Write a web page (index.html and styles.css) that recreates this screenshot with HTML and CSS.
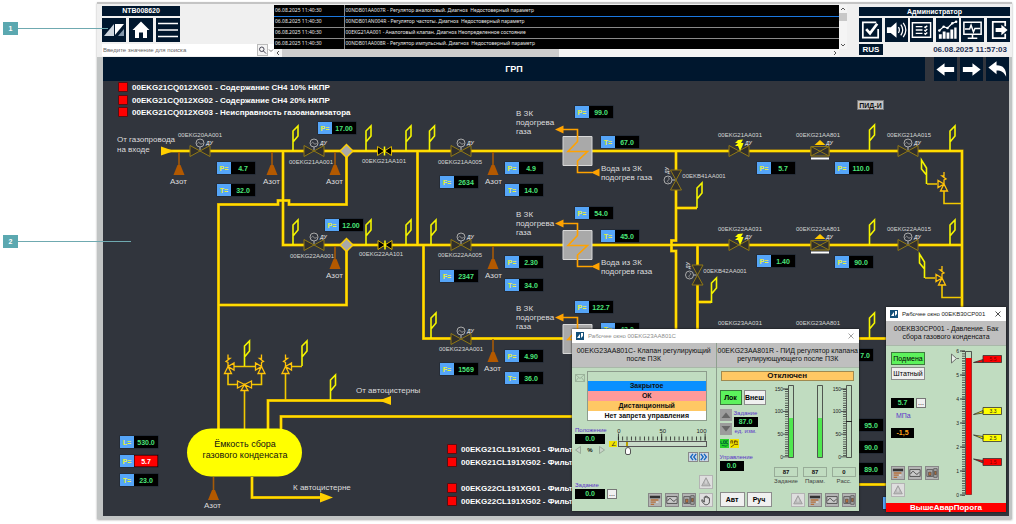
FILE: index.html
```html
<!DOCTYPE html>
<html lang="ru">
<head>
<meta charset="utf-8">
<title>ГРП</title>
<link rel="stylesheet" href="styles.css">
</head>
<body>
<svg class="defs" width="0" height="0" aria-hidden="true">
  <defs>
    <symbol id="i-bars" viewBox="0 0 14 14"><path d="M1 2h12v3H1z" fill="#333"/><path d="M2 7h9M2 9.500h6M2 12h4" stroke="#b5713c" stroke-width="1.500"/><path d="M8 9.500h3" stroke="#eee"/></symbol>
    <symbol id="i-wave" viewBox="0 0 14 14"><path d="M1 3h12v8H1z" fill="#c9c9c9" stroke="#444"/><path d="M2 8c2-4 3.500-3 5-1s3 2 5-1" fill="none" stroke="#333"/></symbol>
    <symbol id="i-unit" viewBox="0 0 14 14"><path d="M1 3h7v8H1zM9 2h4v10H9z" fill="#aaa" stroke="#555"/><path d="M3 6h3v4H3zM10 5h2v4h-2z" fill="#b5713c" stroke="#333" stroke-width=".6"/></symbol>
    <symbol id="i-tri" viewBox="0 0 14 14"><path d="M7 2l5 9.500H2z" fill="#bbb" stroke="#999"/><path d="M7 5v4" stroke="#eee"/></symbol>
    <symbol id="i-hand" viewBox="0 0 14 14"><path d="M2.500 6.500l2.500 3V4c0-1 1.400-1 1.400 0V3c0-1 1.500-1 1.500 0v1c0-1 1.500-1 1.500 0v1c0-1 1.600-1 1.600 0v4c0 2-1.500 3.500-3.500 3.500S4.500 12 2 8z" fill="#ddd" stroke="#333"/></symbol>
    <symbol id="i-app" viewBox="0 0 8 8"><path d="M0 0h8v8H0z" fill="#14507a"/><path d="M1 6l3-4v4zM5 1h2v3L5 6z" fill="#fff"/></symbol>

    <g id="flag"><path d="M0 0V-20L5-25V-15L0-9" fill="none" stroke="#f4f400" stroke-width="1.600"/></g>
    <g id="flagL"><path d="M0 0V-16L-5-24V-15L0-9" fill="none" stroke="#f4f400" stroke-width="1.600"/></g>
    <g id="bow"><path d="M-10-5.500L0 0L10-5.500V5.500L0 0L-10 5.500Z" fill="#302f2c" stroke="#917914"/></g>
    <g id="motor"><path d="M-9.500-3H9.500V3H-9.500z" fill="#31353d"/><use href="#bow"/><path d="M0-1V-4" stroke="#bbb"/><circle cy="-8" r="4" fill="#31353d" stroke="#a9a9a9"/><path d="M-2.500-7.500c1-2 2-1 2.500 0s1.500 1.500 2.500-.5" fill="none" stroke="#a9a9a9" stroke-width=".8"/></g>
    <g id="bolt"><path d="M-9.500-3H9.500V3H-9.500z" fill="#31353d"/><use href="#bow"/><path d="M-1-11L4-11.500 2-8H4.500L3-4 1 0-1-5H-4L-1-8H-4z" fill="#ff0"/></g>
    <g id="control"><path d="M-9-4.500H9V5H-9z" fill="#31353d" stroke="#917914"/><path d="M-9-4.500L9 5V-4.500L-9 5z" fill="#302f2c" stroke="#917914"/><path d="M-5.500-6L0-11 5.500-6z" fill="#ffc800"/><path d="M-9 7.500H9" stroke="#fff" stroke-width="2"/></g>
    <g id="hand"><path d="M-7-4.500L0 0-7 4.500zM7-4.500L0 0 7 4.500z" fill="#000" stroke="#d9b400"/><path d="M0-4.500v9" stroke="#ff0" stroke-width="1.500"/></g>
    <g id="diamond"><path d="M0-6.500L6.500 0 0 6.500-6.500 0z" fill="#a9a9a9" stroke="#ffd000" stroke-width="1.400"/></g>
    <g id="azot"><path d="M0 1V14" stroke="#a65a08" stroke-width="1.600"/><path d="M-1.500 14L-5.500 24H5.500L1.500 14Z" fill="#b35900"/></g>
    <g id="relief" fill="#31353d" stroke="#ffc20a" stroke-width="1.300"><path d="M0 0L6-3.500V3.500zM0 0L-3.500 7H3.500zM0 0V-4L-2-5 2-8 0-8V-12"/></g>
    <g id="tee" fill="#31353d" stroke="#ffc20a" stroke-width="1.300"><path d="M0 0L7-3.500V3.500zM0 0L-7-3.500V3.500zM0 0L-3.500 6H3.500z"/></g>
    <g id="heater"><path d="M563 136.500H592V165.500H563z" fill="#a9a9a9" stroke="#d8d8d8"/><path d="M562 129.500H577.500V141.500L568 151.500H587.500L577.500 161V172.500H592" fill="none" stroke="#ffa200" stroke-width="1.600"/><path d="M555 129.500L563.500 125.500V133.500zM591 172.500L599.500 168.500V176.500z" fill="#ffa200"/></g>
    <g id="ind"><path d="M-.5-.5H38.500V12.500H-.5z" fill="#1b2533"/><path d="M0 0H14V12H0z" fill="#55a5f8"/><path d="M14 0H38V12H14z" fill="#000"/></g>
    <path id="alarm" d="M.5.5H9.500V9.500H.5z" fill="#f00" stroke="#5a0d10"/>
  </defs>
</svg>

<main class="frame">
  <header class="top">
    <div class="station">
      <button class="name-btn">NTB008620</button>
      <div class="tool-row">
        <button class="tool" aria-label="Схема"><svg viewBox="0 0 24 24"><path d="M2 18L12 6V18z" fill="#ced6de"/><path d="M13 6H22L13 17z" fill="#fff"/><path d="M16 18L22 11V18z" fill="#8497aa"/></svg></button>
        <button class="tool" aria-label="Домой"><svg viewBox="0 0 24 24"><path d="M12 3.500L3.500 12H6V20H10V14.500H14V20H18V12H20.500z" fill="#fff"/></svg></button>
        <button class="tool" aria-label="Меню"><svg viewBox="0 0 24 24"><path d="M2 5.500H22M2 12H22M2 18.500H22" stroke="#fff" stroke-width="1.600"/></svg></button>
      </div>
      <form class="search">
        <input type="text" aria-label="Поиск" placeholder="Введите значение для поиска">
        <button type="button" class="find" aria-label="Найти"><svg viewBox="0 0 10 10"><circle cx="4.200" cy="4.200" r="2.500" fill="none" stroke="#334"/><path d="M6 6l3 3" stroke="#334"/></svg></button>
        <button type="button" class="drop" aria-label="Список"><svg viewBox="0 0 6 10"><path d="M1 4.500l2 2 2-2" fill="none" stroke="#777"/></svg></button>
      </form>
    </div>

    <div class="events">
      <table class="log">
        <tr class="sel"><td>06.08.2025 11:40:30</td><td>00NDB01AA007R - Регулятор аналоговый. Диагноз&nbsp; Недостоверный параметр</td></tr>
        <tr><td>06.08.2025 11:40:30</td><td>00NDB01AN004R - Регулятор частоты. Диагноз&nbsp; Недостоверный параметр</td></tr>
        <tr><td>06.08.2025 11:40:30</td><td>00EKG21AA001 - Аналоговый клапан. Диагноз Неопределенное состояние</td></tr>
        <tr><td>06.08.2025 11:40:30</td><td>00NDB01AA008R - Регулятор импульсный. Диагноз&nbsp; Недостоверный параметр</td></tr>
      </table>
      <div class="vbar"><svg viewBox="0 0 8 8"><path d="M2 5l2-2 2 2" fill="none" stroke="#555"/></svg><i></i><svg viewBox="0 0 8 8"><path d="M2 3l2 2 2-2" fill="none" stroke="#555"/></svg></div>
      <div class="hbar"><svg viewBox="0 0 8 8"><path d="M5 2L3 4l2 2" fill="none" stroke="#555"/></svg><i></i><svg viewBox="0 0 8 8"><path d="M3 2l2 2-2 2" fill="none" stroke="#555"/></svg></div>
    </div>

    <div class="user">
      <button class="name-btn">Администратор</button>
      <div class="tool-row">
        <button class="tool" aria-label="Квитировать"><svg viewBox="0 0 24 24"><path d="M18 4H4V20H20V11" fill="none" stroke="#fff" stroke-width="1.800"/><path d="M7.500 11L11.500 15.500 19 5.500" fill="none" stroke="#fff" stroke-width="2.800"/></svg></button>
        <button class="tool" aria-label="Звук"><svg viewBox="0 0 24 24"><path d="M2 9H6L12 4V20L6 15H2z" fill="#fff"/><path d="M14 9q2 3 0 6M16.500 6.500q4 5.500 0 11M19 4.500q5.500 7.500 0 15" fill="none" stroke="#fff" stroke-width="1.300"/></svg></button>
        <button class="tool" aria-label="Журнал"><svg viewBox="0 0 24 24"><path d="M2.500 4.500H21.500V19.500H2.500zM6 8.500H13M6 12H13M6 15.500H13M15 8.500l1 1 2-2M15 12l1 1 2-2M15 15.500l1 1 2-2" fill="none" stroke="#fff" stroke-width="1.500"/></svg></button>
        <button class="tool" aria-label="Тренды"><svg viewBox="0 0 24 24"><path d="M3 16.500H6V21H3zM7 13.500H10V21H7zM11 14.500H14V21H11zM15 11.500H18V21H15zM19 9.500H21.500V21H19z" fill="#fff"/><path d="M3 13L8 8.500 12 10 17 5 21 3.500" fill="none" stroke="#fff" stroke-width="1.300"/><g fill="#fff"><circle cx="3.500" cy="12.500" r="1.300"/><circle cx="8" cy="8.500" r="1.300"/><circle cx="12" cy="10" r="1.300"/><circle cx="17" cy="5" r="1.300"/><circle cx="21" cy="3.500" r="1.300"/></g></svg></button>
        <button class="tool" aria-label="Диагностика"><svg viewBox="0 0 24 24"><path d="M3 4H21V16.500H3zM12 17V20M7 20.500H17" fill="none" stroke="#fff" stroke-width="1.600"/><path d="M4 11H9L10.500 7 13 14 14.500 10.500H20" fill="none" stroke="#fff" stroke-width="1.500"/></svg></button>
        <button class="tool" aria-label="Выход"><svg viewBox="0 0 24 24"><path d="M19 8V3.500H6V20.500H19V16" fill="none" stroke="#fff" stroke-width="1.800"/><path d="M9 10H15V6.500L21.500 12 15 17.500V14H9z" fill="#fff"/></svg></button>
      </div>
      <div class="status-row"><button class="lang">RUS</button><time>06.08.2025 11:57:03</time></div>
    </div>
  </header>

  <section class="stage">
    <nav class="title-bar">
      <h1>ГРП</h1>
      <button class="nav-btn" aria-label="Назад"><svg viewBox="0 0 24 24"><path d="M2.500 12.500L11 6V10H21V15H11V19z" fill="#fff"/></svg></button>
      <button class="nav-btn" aria-label="Вперёд"><svg viewBox="0 0 24 24"><path d="M21.500 12.500L13 6V10H3V15H13V19z" fill="#fff"/></svg></button>
      <button class="nav-btn" aria-label="Вернуться"><svg viewBox="0 0 24 24"><path d="M2.500 10.500L11 4V8C18 8 21.500 12 21 20 19 15.500 16 13.500 11 13.500V17.500z" fill="#fff"/></svg></button>
    </nav>

    <div class="canvas">
      <svg class="scheme" viewBox="103 81 906 435">
        <defs>
          <path id="pipes" d="M165 151H962V340M283 151V245H418M218.500 429V204.500H278V200.500H289V204.500H346.500V151M346.500 245V305H218.500M340 245H962M417.500 151V245M423.500 245V338.500H962M676 151V240.500H671.500V251H676V339M697.500 245V339M676 208H697M697.500 302H711M268 429V400.500H384M281 431V416.500H600M252 477V497.500H322M850 484.500H900"/>
        </defs>
        <use href="#pipes" class="pipe-edge"/>
        <use href="#pipes" class="pipe-core"/>
        <path class="thin" d="M927 184H937M944 190V203.500H962M925 278H935M942 285V297.500H962M228 372V384.500H238M261.500 372V384.500H252M234 366.500H256M244.500 391V429M291 366.500H302M285.500 373V400"/>
        <g fill="#ffcf00"><path d="M161 146.500L174 151 161 155.500zM391 396L379 400.500 391 405zM320 492.500L333 497.500 320 502.500z"/></g>

        <use href="#motor" x="200" y="151"/><use href="#motor" x="314" y="151"/><use href="#motor" x="461" y="151"/><use href="#motor" x="908" y="151"/>
        <use href="#motor" x="314" y="245"/><use href="#motor" x="461" y="245"/><use href="#motor" x="908" y="245"/>
        <use href="#motor" x="461" y="339"/>
        <use href="#motor" transform="translate(676 180) rotate(-90)"/><use href="#motor" transform="translate(697.500 275) rotate(-90)"/>
        <use href="#bolt" x="739" y="151"/><use href="#bolt" x="739" y="245"/>
        <use href="#control" x="820" y="151"/><use href="#control" x="820" y="245"/>
        <use href="#hand" x="384.500" y="151"/><use href="#hand" x="385" y="245"/>
        <use href="#diamond" x="346.500" y="151"/><use href="#diamond" x="346.500" y="245"/>

        <use href="#flag" x="293" y="151"/><use href="#flag" x="366" y="151"/><use href="#flag" x="406" y="151"/><use href="#flag" x="429.500" y="151"/><use href="#flag" x="869.500" y="150"/><use href="#flag" x="950" y="151"/>
        <use href="#flag" x="293" y="245"/><use href="#flag" x="366" y="245"/><use href="#flag" x="406" y="245"/><use href="#flag" x="431" y="245"/><use href="#flag" x="869.500" y="245"/><use href="#flag" x="950" y="245"/>
        <use href="#flag" x="431" y="338"/><use href="#flag" x="869.500" y="338"/><use href="#flag" x="697" y="208"/><use href="#flag" x="711.500" y="303"/>
        <use href="#flag" x="244.500" y="366"/><use href="#flag" x="302" y="366"/><use href="#flag" x="330.500" y="400"/>
        <use href="#flagL" x="926.500" y="184"/><use href="#flagL" x="924.500" y="278"/>

        <use href="#azot" x="179" y="151"/><use href="#azot" x="272" y="151"/><use href="#azot" x="335" y="151"/><use href="#azot" x="493" y="151"/>
        <use href="#azot" x="335" y="245"/><use href="#azot" x="493" y="245"/><use href="#azot" x="493" y="338"/><use href="#azot" x="213.500" y="476"/>

        <use href="#relief" transform="translate(944 184) scale(-1 1)"/><use href="#relief" transform="translate(942 278) scale(-1 1)"/>
        <use href="#relief" x="228" y="366.500"/><use href="#relief" transform="translate(261.500 366.500) scale(-1 1)"/><use href="#relief" x="285.500" y="366.500"/>
        <use href="#tee" x="244.500" y="384.500"/>
        <use href="#heater"/><use href="#heater" y="94"/><use href="#heater" y="188"/>

        <rect x="187" y="428.500" width="115" height="48" rx="24" fill="#ff0"/>
        <g class="tank"><text x="245" y="447">Ёмкость сбора</text><text x="245" y="458">газового конденсата</text></g>

        <g class="du">
          <text x="206" y="145">ДУ</text><text x="320" y="145">ДУ</text><text x="467" y="145">ДУ</text><text x="914" y="145">ДУ</text><text x="745" y="145">ДУ</text><text x="826" y="145">ДУ</text>
          <text x="320" y="239">ДУ</text><text x="467" y="239">ДУ</text><text x="914" y="239">ДУ</text><text x="745" y="239">ДУ</text><text x="826" y="239">ДУ</text><text x="467" y="333">ДУ</text>
          <text transform="translate(669 174) rotate(-90)">ДУ</text><text transform="translate(690 269) rotate(-90)">ДУ</text>
        </g>
        <g class="tag">
          <text x="200" y="137">00EKG20AA001</text><text x="311" y="164">00EKG21AA001</text><text x="384" y="163">00EKG21AA101</text><text x="460" y="164">00EKG21AA005</text>
          <text x="740" y="137">00EKG21AA031</text><text x="818" y="137">00EKG21AA801</text><text x="909" y="137">00EKG21AA015</text><text x="704" y="178">00EKB41AA001</text>
          <text x="312" y="258">00EKG22AA001</text><text x="381" y="256">00EKG22AA101</text><text x="460" y="257">00EKG22AA005</text>
          <text x="740" y="231">00EKG22AA031</text><text x="818" y="231">00EKG22AA801</text><text x="909" y="231">00EKG22AA015</text><text x="725" y="273">00EKB42AA001</text>
          <text x="461" y="351">00EKG23AA001</text><text x="740" y="325">00EKG23AA031</text><text x="818" y="325">00EKG23AA801</text>
        </g>
        <g class="label">
          <text x="117" y="142">От газопровода</text><text x="117" y="152">на входе</text>
          <text x="170" y="184">Азот</text><text x="263" y="184">Азот</text><text x="326" y="184">Азот</text><text x="485" y="184">Азот</text>
          <text x="326" y="278">Азот</text><text x="485" y="278">Азот</text><text x="484" y="371">Азот</text><text x="204" y="508">Азот</text>
          <text x="516" y="116">В ЗК</text><text x="516" y="125">подогрева</text><text x="516" y="134">газа</text>
          <text x="516" y="217">В ЗК</text><text x="516" y="226">подогрева</text><text x="516" y="235">газа</text>
          <text x="516" y="311">В ЗК</text><text x="516" y="320">подогрева</text><text x="516" y="329">газа</text>
          <text x="601" y="171">Вода из ЗК</text><text x="601" y="180">подогрев газа</text>
          <text x="601" y="265">Вода из ЗК</text><text x="601" y="274">подогрев газа</text>
          <text x="356" y="393">От автоцистерны</text><text x="293" y="490">К автоцистерне</text>
        </g>
        <g class="alarm">
          <use href="#alarm" x="118" y="82"/><text x="132" y="90">00EKG21CQ012XG01 - Содержание CH4 10% НКПР</text>
          <use href="#alarm" x="118" y="95"/><text x="132" y="103">00EKG21CQ012XG02 - Содержание CH4 20% НКПР</text>
          <use href="#alarm" x="118" y="107"/><text x="132" y="115">00EKG21CQ012XG03 - Неисправность газоанализатора</text>
          <use href="#alarm" x="447" y="444"/><text x="461" y="452">00EKG21CL191XG01 - Фильтр</text>
          <use href="#alarm" x="447" y="457"/><text x="461" y="465">00EKG21CL191XG02 - Фильтр</text>
          <use href="#alarm" x="447" y="483"/><text x="461" y="491">00EKG22CL191XG01 - Фильтр</text>
          <use href="#alarm" x="447" y="496"/><text x="461" y="504">00EKG22CL191XG02 - Фильтр</text>
        </g>
        <rect x="857.500" y="100.500" width="26" height="9" fill="#c4c4c4" stroke="#777"/><text class="mode" x="870.500" y="108">ПИД-И</text>

        <g class="ind">
          <g transform="translate(318 122)"><use href="#ind"/><text class="q" x="7" y="9">P=</text><text x="26" y="9">17.00</text></g>
          <g transform="translate(217 162)"><use href="#ind"/><text class="q" x="7" y="9">P=</text><text x="26" y="9">4.7</text></g>
          <g transform="translate(217 184)"><use href="#ind"/><text class="q" x="7" y="9">T=</text><text x="26" y="9">32.0</text></g>
          <g transform="translate(325 219)"><use href="#ind"/><text class="q" x="7" y="9">P=</text><text x="26" y="9">12.00</text></g>
          <g transform="translate(440 176)"><use href="#ind"/><text class="q" x="7" y="9">F=</text><text x="26" y="9">2634</text></g>
          <g transform="translate(505 162)"><use href="#ind"/><text class="q" x="7" y="9">P=</text><text x="26" y="9">4.9</text></g>
          <g transform="translate(505 184)"><use href="#ind"/><text class="q" x="7" y="9">T=</text><text x="26" y="9">14.0</text></g>
          <g transform="translate(575 106)"><use href="#ind"/><text class="q" x="7" y="9">P=</text><text x="26" y="9">99.0</text></g>
          <g transform="translate(601 136)"><use href="#ind"/><text class="q" x="7" y="9">T=</text><text x="26" y="9">67.0</text></g>
          <g transform="translate(575 207)"><use href="#ind"/><text class="q" x="7" y="9">P=</text><text x="26" y="9">54.0</text></g>
          <g transform="translate(601 230)"><use href="#ind"/><text class="q" x="7" y="9">T=</text><text x="26" y="9">45.0</text></g>
          <g transform="translate(440 270)"><use href="#ind"/><text class="q" x="7" y="9">F=</text><text x="26" y="9">2347</text></g>
          <g transform="translate(505 256)"><use href="#ind"/><text class="q" x="7" y="9">P=</text><text x="26" y="9">2.30</text></g>
          <g transform="translate(505 279)"><use href="#ind"/><text class="q" x="7" y="9">T=</text><text x="26" y="9">34.0</text></g>
          <g transform="translate(757 162)"><use href="#ind"/><text class="q" x="7" y="9">P=</text><text x="26" y="9">5.7</text></g>
          <g transform="translate(835 162)"><use href="#ind"/><text class="q" x="7" y="9">P=</text><text x="26" y="9">110.0</text></g>
          <g transform="translate(757 255)"><use href="#ind"/><text class="q" x="7" y="9">P=</text><text x="26" y="9">1.40</text></g>
          <g transform="translate(835 256)"><use href="#ind"/><text class="q" x="7" y="9">P=</text><text x="26" y="9">90.0</text></g>
          <g transform="translate(575 301)"><use href="#ind"/><text class="q" x="7" y="9">P=</text><text x="26" y="9">122.7</text></g>
          <g transform="translate(601 323)"><use href="#ind"/><text class="q" x="7" y="9">T=</text><text x="26" y="9">43.0</text></g>
          <g transform="translate(440 363)"><use href="#ind"/><text class="q" x="7" y="9">F=</text><text x="26" y="9">1569</text></g>
          <g transform="translate(505 350)"><use href="#ind"/><text class="q" x="7" y="9">P=</text><text x="26" y="9">4.90</text></g>
          <g transform="translate(505 372)"><use href="#ind"/><text class="q" x="7" y="9">T=</text><text x="26" y="9">36.0</text></g>
          <g transform="translate(120 436)"><use href="#ind"/><text class="q" x="7" y="9">L=</text><text x="26" y="9">530.0</text></g>
          <g transform="translate(120 455)"><use href="#ind"/><path d="M14.500.500h23v11h-23z" fill="#f00"/><text class="q" x="7" y="9">P=</text><text class="hot" x="26" y="9">5.7</text></g>
          <g transform="translate(120 474)"><use href="#ind"/><text class="q" x="7" y="9">T=</text><text x="26" y="9">23.0</text></g>
          <g transform="translate(835 349)"><use href="#ind"/><text x="30" y="9">7.0</text></g>
          <g transform="translate(845 419)"><use href="#ind"/><text x="26" y="9">95.0</text></g>
          <g transform="translate(845 441)"><use href="#ind"/><text x="26" y="9">90.0</text></g>
          <g transform="translate(845 463)"><use href="#ind"/><text x="26" y="9">89.0</text></g>
          <g transform="translate(883 497)"><use href="#ind"/></g>
        </g>
      </svg>

      <article class="win win-control">
        <div class="win-title"><svg class="app"><use href="#i-app"/></svg><span class="dim">Рабочее окно 00EKG23AA801C</span><button class="close dim" aria-label="Закрыть"><svg viewBox="0 0 8 8"><path d="M1.500 1.500l5 5M6.500 1.500l-5 5" stroke="currentColor" stroke-width=".8"/></svg></button></div>
        <div class="panels">
          <section class="panel">
            <h2>00EKG23AA801C- Клапан регулирующий<br>после ПЗК</h2>
            <div class="panel-body">
              <div class="state">
                <svg class="mail" viewBox="0 0 10 8"><path d="M.5.500h9v7h-9zM.5.500l4.500 4 4.500-4M.5 7.500l3-4M9.500 7.500l-3-4" fill="none" stroke="#93a893" stroke-width=".8"/></svg>
                <ul class="state-list"><li></li><li class="blue">Закрытое</li><li class="pink">ОК</li><li class="amber">Дистанционный</li><li class="white">Нет запрета управления</li></ul>
              </div>
              <div class="position">
                <div class="field"><span class="cap">Положение</span><output class="val">0.0</output>
                  <div class="step"><svg viewBox="0 0 6 8"><path d="M5.500.500v7L.5 4z" fill="#c8d4c8" stroke="#8a9a8a" stroke-width=".7"/></svg><b>%</b><svg viewBox="0 0 6 8"><path d="M.5.500v7l5-3.500z" fill="#c8d4c8" stroke="#8a9a8a" stroke-width=".7"/></svg></div>
                </div>
                <div class="slider">
                  <svg class="scale" viewBox="0 0 98 14"><g class="num"><text x="10" y="6" text-anchor="middle">0</text><text x="54" y="6" text-anchor="middle">50</text><text x="93" y="6" text-anchor="middle">100</text></g><path d="M9 11.500H97.500" stroke="#222" stroke-width="4" stroke-dasharray=".8 3.560"/><path d="M9 10H97.500" stroke="#222" stroke-width="7" stroke-dasharray=".8 42.800"/></svg>
                  <div class="slide-row"><span class="chip">&#8736;</span><input type="range" min="0" max="100" value="7" aria-label="Положение"></div>
                </div>
              </div>
              <div class="jump"><button class="mini" aria-label="Меньше"><svg viewBox="0 0 10 10"><path d="M5 1L2 5l3 4M9 1L6 5l3 4" fill="none" stroke="#1668c0" stroke-width="1.700"/></svg></button><button class="mini" aria-label="Больше"><svg viewBox="0 0 10 10"><path d="M1 1l3 4-3 4M5 1l3 4-3 4" fill="none" stroke="#1668c0" stroke-width="1.700"/></svg></button></div>
              <div class="foot">
                <div class="field"><span class="cap">Задание</span><div class="pair"><output class="val">0.0</output><button class="dots">...</button></div></div>
                <div class="icons">
                  <button class="ico pale last" aria-label="Тревога"><svg><use href="#i-tri"/></svg></button>
                  <button class="ico" aria-label="Обзор"><svg><use href="#i-bars"/></svg></button><button class="ico" aria-label="Тренд"><svg><use href="#i-wave"/></svg></button><button class="ico" aria-label="Агрегат"><svg><use href="#i-unit"/></svg></button><button class="ico pale" aria-label="Ручной"><svg><use href="#i-hand"/></svg></button>
                </div>
              </div>
            </div>
          </section>
          <section class="panel">
            <h2>00EKG23AA801R - ПИД регулятор клапана<br>регулирующующего после ПЗК</h2>
            <div class="panel-body pid">
              <p class="off">Отключен</p>
              <div class="pid-main">
                <div class="pid-left">
                  <div class="btn-row"><button class="btn on">Лок</button><button class="btn">Внеш</button></div>
                  <div class="set">
                    <div class="arrows"><button class="arr" aria-label="Больше"><svg viewBox="0 0 12 12"><path d="M6 3.500L10.500 9h-9z" fill="#666"/></svg></button><button class="arr" aria-label="Меньше"><svg viewBox="0 0 12 12"><path d="M6 8.500L10.500 3h-9z" fill="#666"/></svg></button></div>
                    <div class="field"><span class="cap">Задание</span><output class="val">87.0</output><span class="cap mid">ед. изм.</span></div>
                  </div>
                  <div class="locks"><svg viewBox="0 0 10 10"><path d="M0 0h10v10H0z" fill="#29d329"/><path d="M1 2v3h2M4 2h2v3H4zM9 2H7v3h2M2 7l5 1 2-2" fill="none" stroke="#063"/></svg><svg viewBox="0 0 10 10"><path d="M0 0h10v10H0z" fill="#f0e400"/><path d="M1 5V2h2v3M5 5V2h2v1H5M8 2v3M1 9l4-3h4" fill="none" stroke="#640"/></svg></div>
                  <div class="field"><span class="cap">Управление</span><output class="val">0.0</output></div>
                </div>
                <div class="gauges">
                  <div class="gauge"><svg viewBox="0 0 24 76"><g class="num"><text x="9" y="7">150</text><text x="9" y="29">100</text><text x="9" y="52">50</text><text x="9" y="75">0</text></g><path d="M12.500 5V73.500" stroke="#333" stroke-width="3" stroke-dasharray=".7 1.580"/><path d="M11.500 4.600V73.500" stroke="#333" stroke-width="5" stroke-dasharray=".8 21.800"/><path d="M14.500 1.500h5v72h-5z" fill="#c0dcc0" stroke="#333" stroke-width=".8"/><path d="M15 34h4v39h-4z" fill="#4fe84f"/></svg><output>87</output><span>Задание</span></div>
                  <div class="gauge"><svg viewBox="0 0 24 76"><path d="M14.500 1.500h5v72h-5z" fill="#c0dcc0" stroke="#333" stroke-width=".8"/><path d="M15 34h4v39h-4z" fill="#4fe84f"/></svg><output>87</output><span>Парам.</span></div>
                  <div class="gauge"><svg viewBox="0 0 24 76"><g class="num"><text x="9" y="7">150</text><text x="9" y="29">100</text><text x="9" y="52">50</text><text x="9" y="75">0</text></g><path d="M12.500 5V73.500" stroke="#333" stroke-width="3" stroke-dasharray=".7 1.580"/><path d="M11.500 4.600V73.500" stroke="#333" stroke-width="5" stroke-dasharray=".8 21.800"/><path d="M14.500 1.500h5v72h-5z" fill="#c0dcc0" stroke="#333" stroke-width=".8"/><path d="M14 37.500h6" stroke="#222"/></svg><output>0</output><span>Расс.</span></div>
                </div>
              </div>
              <div class="pid-foot">
                <div class="btn-row"><button class="btn wide">Авт</button><button class="btn wide">Руч</button></div>
                <div class="icons"><button class="ico pale" aria-label="Тревога"><svg><use href="#i-tri"/></svg></button><button class="ico" aria-label="Обзор"><svg><use href="#i-bars"/></svg></button><button class="ico" aria-label="Тренд"><svg><use href="#i-wave"/></svg></button><button class="ico" aria-label="Агрегат"><svg><use href="#i-unit"/></svg></button></div>
              </div>
            </div>
          </section>
        </div>
      </article>

      <article class="win win-pressure">
        <div class="win-title"><svg class="app"><use href="#i-app"/></svg><span>Рабочее окно 00EKB30CP001</span><button class="close" aria-label="Закрыть"><svg viewBox="0 0 8 8"><path d="M1.500 1.500l5 5M6.500 1.500l-5 5" stroke="currentColor" stroke-width=".8"/></svg></button></div>
        <h2 class="wide">00EKB30CP001 - Давление. Бак<br>сбора газового конденсата</h2>
        <div class="pressure">
          <div class="p-left">
            <button class="btn sub on">Подмена</button>
            <button class="btn sub">Штатный</button>
            <div class="pair first"><output class="val">5.7</output><button class="dots">...</button></div>
            <span class="unit">МПа</span>
            <output class="val warn">-1,5</output>
            <div class="icons"><button class="ico" aria-label="Обзор"><svg><use href="#i-bars"/></svg></button><button class="ico" aria-label="Тренд"><svg><use href="#i-wave"/></svg></button><button class="ico" aria-label="Агрегат"><svg><use href="#i-unit"/></svg></button></div>
            <button class="ico pale" aria-label="Тревога"><svg><use href="#i-tri"/></svg></button>
          </div>
          <svg class="p-gauge" viewBox="946 346 58 156">
            <g class="num"><text x="959" y="352">6</text><text x="959" y="376">5</text><text x="959" y="400">4</text><text x="959" y="424">3</text><text x="959" y="448">2</text><text x="959" y="472">1</text><text x="959" y="496">0</text></g>
            <path d="M963.500 350V494.500" stroke="#333" stroke-width="3" stroke-dasharray=".8 1.600"/><path d="M962.500 349.600V494.500" stroke="#333" stroke-width="5" stroke-dasharray=".8 23.200"/>
            <path d="M965.500 350.500h6v143h-6z" fill="#c0dcc0" stroke="#333" stroke-width=".8"/><path d="M966 357h5.500v136.500H966z" fill="#f00"/>
            <path d="M951.500 353v9l5-4.500zM957 357.500h2" fill="#e8f0e8" stroke="#555" stroke-width=".8"/>
            <g stroke="#333" stroke-width=".8"><path d="M973.500 361.500L983 358.500V361.500zM983 354.500h18.500v7H983zM973.500 458L983 459.500V462zM983 457.500h18.500v7H983z" fill="#f00"/><path d="M973.500 413.500L983 409.500V412zM983 406.500h18.500v7H983zM973.500 434L983 435.500V438zM983 433.500h18.500v7H983z" fill="#ff0"/></g>
            <g class="num mid"><text class="r" x="993" y="360">5.5</text><text x="993" y="412">3.3</text><text x="993" y="439">2.5</text><text class="r" x="993" y="463">1.5</text></g>
          </svg>
        </div>
        <p class="alert">ВышеАварПорога</p>
      </article>
    </div>
  </section>
</main>

<div class="callout one"><span>1</span><i></i></div>
<div class="callout two"><span>2</span><i></i></div>
</body>
</html>
```
FILE: styles.css
```css
* { box-sizing: border-box; }
body { margin: 0; background: #fff; font-family: "Liberation Sans", Arial, sans-serif; font-size: 7px; line-height: 8px; color: #111; }
button { font: inherit; padding: 0; border: 0; margin: 0; display: block; cursor: pointer; }
h1, h2, p, ul { margin: 0; padding: 0; }
svg { display: block; }
.defs { position: absolute; }

.frame { margin: 2px 4px 4px 97px; background: #c1c4c4; border-top: 2px solid #c4c4c4; box-shadow: 0 1px 2px #aaa; }

.top { display: flex; height: 53px; background: #f0f0f0; }
.station { width: 177px; padding: 2px 0 1px 5px; display: flex; flex-direction: column; gap: 2px; }
.name-btn { height: 10px; line-height: 10px; background: #00172e; color: #fff; font-weight: bold; font-size: 7px; text-align: center; }
.station .name-btn { width: 78px; }
.tool-row { display: flex; gap: 3px; }
.tool { width: 24px; height: 24px; background: #00172e; }
.tool svg { width: 24px; height: 24px; }
.search { display: flex; height: 12px; background: #fff; }
.search input { flex: 1; min-width: 0; border: 0; padding: 0 1px; font: 6px "Liberation Sans", Arial, sans-serif; background: #fff; }
.search input::placeholder { color: #666; opacity: 1; }
.find { width: 11px; background: #f4f4f4; border: 1px solid #bbb; }
.drop { width: 6px; background: #fff; }
.find svg, .drop svg { height: 10px; width: 100%; }

.events { flex: 1; display: grid; grid-template-columns: 1fr 8px; grid-template-rows: 44px 8px; padding-top: 1px; background: #f0f0f0; }
.log { width: 100%; height: 44px; border-collapse: collapse; background: #000; color: #e8e8e8; font: 5px/9px "Noto Sans", sans-serif; table-layout: fixed; }
.log td { height: 11px; padding: 0 1px; border-bottom: 1px solid #8a8a8a; white-space: nowrap; }
.log td:first-child { width: 70px; border-right: 1px solid #8a8a8a; }
.log .sel td { border-bottom: 1px solid #1b78e0; }
.vbar { display: flex; flex-direction: column; background: #f4f4f4; }
.vbar svg, .hbar svg { width: 8px; height: 8px; }
.vbar i { height: 8px; background: #c8c8c8; margin-bottom: auto; }
.hbar { display: flex; background: #f4f4f4; }
.hbar i { width: 49%; background: #cdcdcd; margin-right: auto; }

.user { width: 151px; margin: 3px 2px 0 12px; display: flex; flex-direction: column; gap: 2px; }
.user .name-btn { height: 9px; line-height: 9px; }
.user .tool-row { gap: 2px; justify-content: space-between; }
.user .tool { width: 23px; }
.user .tool svg { width: 23px; }
.status-row { display: flex; justify-content: space-between; }
.lang { width: 24px; height: 11px; line-height: 11px; background: #00172e; color: #fff; font-size: 8px; font-weight: bold; }
.status-row time { font-size: 8px; line-height: 12px; font-weight: bold; color: #1d2f52; padding-right: 3px; }

.stage { padding: 0 3px 3px 6px; }
.title-bar { display: flex; gap: 3px; height: 24px; background: #31353d; }
.title-bar h1 { flex: 1; margin-right: 6px; background: #00172e; color: #fff; font-size: 9px; line-height: 25px; text-align: center; }
.nav-btn { width: 23px; background: #00172e; }
.nav-btn svg { width: 23px; height: 24px; }

.canvas { position: relative; background: #31353d; }
.scheme { width: 100%; height: auto; }
.pipe-edge { fill: none; stroke: #c99a00; stroke-width: 3; }
.pipe-core { fill: none; stroke: #ffdc00; stroke-width: 2; }
.thin { fill: none; stroke: #f2c800; stroke-width: 1.6; }
.tank { font-size: 9px; text-anchor: middle; fill: #111; }
.du { font: italic bold 5px "Liberation Sans", Arial, sans-serif; fill: #ccc; }
.tag { font-size: 6px; text-anchor: middle; fill: #d6d6d6; }
.label { font-size: 8px; fill: #dcdcdc; }
.alarm { font-size: 8px; font-weight: bold; fill: #fff; }
.mode { font-size: 7px; font-weight: bold; text-anchor: middle; fill: #111; }
.ind { font-size: 7px; font-weight: bold; text-anchor: middle; fill: #4be57a; }
.ind .q { fill: #e6f03c; }
.ind .hot { fill: #fff; }

.win { position: absolute; background: #c0dcc0; box-shadow: 0 0 2px #111; }
.win-control { right: 150px; bottom: 5px; width: 287px; }
.win-pressure { right: 3px; bottom: 4px; width: 120px; }
.win-title { display: flex; align-items: center; gap: 4px; height: 14px; padding: 0 4px; background: #fff; font-size: 6px; color: #222; }
.win-title .dim { color: #8c8c8c; }
.app { width: 8px; height: 8px; }
.close { margin-left: auto; background: none; color: #222; }
.close svg { width: 8px; height: 8px; }
.win h2 { display: grid; justify-content: center; background: #bfbfbf; font-size: 7px; font-weight: normal; line-height: 8px; text-align: center; height: 25px; padding-top: 4px; white-space: nowrap; border-bottom: 1px solid #a9b8a9; }
.win h2 { display: block; }
.panels { display: grid; grid-template-columns: minmax(0, 1fr) minmax(0, 1fr); }
.panel + .panel { border-left: 1px solid #8fa08f; }
.panel-body { padding: 3px 3px 4px; height: 143px; display: flex; flex-direction: column; }

.state { display: flex; gap: 2px; padding-right: 6px; }
.mail { width: 10px; height: 8px; margin-top: 3px; }
.state-list { flex: 1; list-style: none; border: 1px solid #8c9c8c; font-weight: bold; text-align: center; }
.state-list li { height: 10px; line-height: 10px; }
.state-list li:first-child, .state-list li:last-child { height: 9px; }
.blue { background: #0a90ff; }
.pink { background: #ff9a9a; }
.amber { background: #ffc864; }
.white { background: #fff; }
.cap { display: block; font-size: 6px; line-height: 7px; color: #5a35c8; }
.cap.mid { text-align: center; }
.val { display: block; width: 30px; height: 10px; line-height: 10px; background: #000; color: #4be57a; font-weight: bold; text-align: center; border: 0; }
.position { display: flex; gap: 4px; margin-top: 6px; padding-right: 6px; }
.position .field { width: 30px; }
.step { display: flex; justify-content: space-between; align-items: center; font-size: 6px; margin-top: 2px; }
.step svg { width: 6px; height: 8px; }
.slider { flex: 1; min-width: 0; }
.scale { width: 100%; height: 14px; overflow: visible; }
.num { font-size: 6px; fill: #222; }
.slide-row { display: flex; align-items: flex-start; gap: 1px; }
.chip { width: 8px; height: 6px; font-size: 6px; line-height: 6px; background: #f0e400; color: #333; text-align: center; }
.slide-row input { flex: 1; min-width: 0; height: 14px; margin: 0; appearance: none; background: none; }
.slide-row input::-webkit-slider-runnable-track { height: 6px; margin-bottom: 8px; border: 1px solid #555; background: linear-gradient(90deg, transparent 7px, #b8a000 7px, #b8a000 9px, transparent 9px) #c9dcc9; }
.slide-row input::-webkit-slider-thumb { appearance: none; width: 6px; height: 8px; margin-top: 5px; border: 1px solid #555; border-radius: 3px 3px 2px 2px; background: #fff; }
.jump { display: flex; gap: 1px; justify-content: flex-end; padding-right: 4px; margin-top: -3px; }
.mini { width: 10px; height: 10px; background: #ccd6e4; border: 1px solid #8a8a8a; }
.mini svg { width: 8px; height: 8px; }
.foot { margin-top: auto; display: flex; justify-content: space-between; align-items: flex-end; }
.foot .field { padding-bottom: 8px; }
.pair { display: flex; gap: 2px; }
.dots { width: 10px; height: 10px; line-height: 6px; background: #f0f0f0; border: 1px solid #777; }
.icons { display: grid; grid-template-columns: repeat(4, 14px); gap: 4px 3px; }
.ico { width: 14px; height: 14px; background: #b4b4b4; border: 1px solid #888; }
.ico.pale { background: #dedede; border-color: #b4b4b4; }
.ico.last { grid-column: 4; }
.ico svg { width: 12px; height: 12px; }

.off { background: #ffc864; border: 1px solid #a08a50; font-weight: bold; text-align: center; line-height: 8px; font-size: 8px; margin: 0 2px 0 1px; }
.pid-main { display: flex; justify-content: space-between; margin-top: 3px; }
.pid-left { padding-top: 6px; width: 48px; }
.btn-row { display: flex; gap: 2px; }
.btn { width: 22px; height: 15px; font-weight: bold; background: #f0f0f0; border: 1px solid #8c8c8c; }
.btn.on { background: #5cf25c; border-color: #3c7a3c; }
.btn.wide { width: 25px; }
.set { display: flex; gap: 2px; margin-top: 4px; }
.arrows { display: flex; flex-direction: column; gap: 2px; }
.arr { width: 12px; height: 12px; background: #9c9c9c; }
.set .field { padding-top: 1px; }
.pid-left .val { width: 24px; }
.set .cap.mid { margin-top: 1px; }
.locks { display: flex; gap: 1px; margin: 4px 0 6px; }
.locks svg { width: 9px; height: 9px; }
.gauges { display: grid; grid-template-columns: repeat(3, 24px); gap: 5px; }
.gauge svg { width: 24px; height: 76px; }
.gauge .num { text-anchor: end; font-size: 5px; }
.gauge output { display: block; margin-top: 7px; height: 10px; line-height: 9px; border: 1px solid #98ac98; text-align: center; font-size: 6px; font-weight: bold; }
.gauge span { display: block; text-align: center; white-space: nowrap; font-size: 6px; color: #444; }
.pid-foot { margin-top: auto; display: flex; justify-content: space-between; align-items: flex-end; }

.pressure { display: flex; justify-content: space-between; padding: 1px 2px 1px 5px; height: 157px; }
.p-left { display: flex; flex-direction: column; padding-top: 5px; }
.btn.sub { width: 34px; height: 13px; margin-bottom: 2px; font-weight: normal; }
.p-left .val { width: 23px; }
.first { margin-top: 16px; }
.unit { color: #5a35c8; padding: 4px 0 8px 5px; }
.p-left .warn { color: #ffa41c; margin-bottom: 28px; }
.p-left .icons { grid-template-columns: repeat(3, 14px); margin-bottom: 3px; }
.p-gauge { width: 58px; height: 156px; }
.p-gauge .num { text-anchor: end; font-size: 5px; }
.p-gauge .mid { text-anchor: middle; }
.p-gauge .r { fill: #700; }
.alert { background: #f00; color: #fff; font-weight: bold; font-size: 8px; line-height: 9px; text-align: center; }

.callout { position: absolute; left: 3px; display: flex; align-items: center; }
.callout span { width: 15px; height: 13px; line-height: 13px; background: #5ba8b0; color: #fff; font-weight: bold; text-align: center; }
.callout i { height: 1px; background: #6fa9b0; }
.one { top: 22px; }
.one i { width: 90px; }
.two { top: 235px; }
.two i { width: 113px; }
```
